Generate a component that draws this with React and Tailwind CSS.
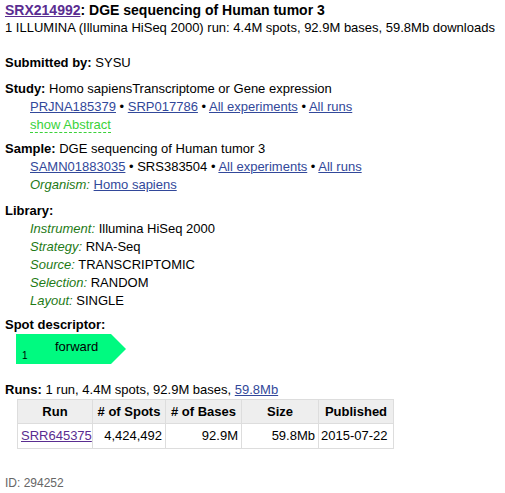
import React from 'react';

const A = ({ children, visited }) => (
  <a href="#" className={visited ? 'text-[#5a2d91] underline' : 'text-[#32489a] underline'}>
    {children}
  </a>
);

const Lbl = ({ children }) => <i className="text-[#1e7a16]">{children}:</i>;

const Dot = () => <span> • </span>;

export default function App() {
  return (
    <div className="font-['Liberation_Sans',Arial,sans-serif] text-[13px] leading-[18px] text-black px-[5px] pt-[1px] bg-white min-h-[493px]">
      <div className="text-[14px] font-bold leading-[18px]">
        <A visited>SRX214992</A>: DGE sequencing of Human tumor 3
      </div>
      <div>1 ILLUMINA (Illumina HiSeq 2000) run: 4.4M spots, 92.9M bases, 59.8Mb downloads</div>

      <div className="mt-[17px]">
        <b>Submitted by:</b> SYSU
      </div>

      <div className="mt-[8px]">
        <b>Study:</b> Homo sapiensTranscriptome or Gene expression
      </div>
      <div className="pl-[25px]">
        <A>PRJNA185379</A>
        <Dot />
        <A>SRP017786</A>
        <Dot />
        <A>All experiments</A>
        <Dot />
        <A>All runs</A>
      </div>
      <div className="pl-[25px]">
        <span className="text-[#3ad23a] border-b border-dashed border-[#3ad23a]">show Abstract</span>
      </div>

      <div className="mt-[6px]">
        <b>Sample:</b> DGE sequencing of Human tumor 3
      </div>
      <div className="pl-[25px]">
        <A>SAMN01883035</A>
        <Dot />
        SRS383504
        <Dot />
        <A>All experiments</A>
        <Dot />
        <A>All runs</A>
      </div>
      <div className="pl-[25px]">
        <Lbl>Organism</Lbl> <A>Homo sapiens</A>
      </div>

      <div className="mt-[8px] font-bold">Library:</div>
      <div className="pl-[25px]">
        <div><Lbl>Instrument</Lbl> Illumina HiSeq 2000</div>
        <div><Lbl>Strategy</Lbl> RNA-Seq</div>
        <div><Lbl>Source</Lbl> TRANSCRIPTOMIC</div>
        <div><Lbl>Selection</Lbl> RANDOM</div>
        <div><Lbl>Layout</Lbl> SINGLE</div>
      </div>

      <div className="mt-[6px] font-bold">Spot descriptor:</div>
      <div className="pl-[11px]">
        <div className="relative w-[110px] h-[30px]">
          <svg width="110" height="30" className="absolute left-0 top-0">
            <polygon points="0,0 95,0 110,15 95,30 0,30" fill="#00fa80" />
          </svg>
          <span className="absolute left-[39px] top-[4px] text-[13px]">forward</span>
          <span className="absolute left-[6px] top-[13px] text-[10px]">1</span>
        </div>
      </div>

      <div className="mt-[17px]">
        <b>Runs:</b> 1 run, 4.4M spots, 92.9M bases, <A>59.8Mb</A>
      </div>
      <div className="pl-[12px]">
        <table className="border-collapse text-[13px] table-fixed w-[376px]">
          <thead>
            <tr className="bg-[#eeeeee]">
              <th className="border border-[#dddddd] px-[3px] h-[24px] w-[75px] text-center">Run</th>
              <th className="border border-[#dddddd] px-[3px] h-[24px] w-[73px] text-center">
                # of Spots
              </th>
              <th className="border border-[#dddddd] px-[3px] h-[24px] w-[76px] text-center">
                # of Bases
              </th>
              <th className="border border-[#dddddd] px-[3px] h-[24px] w-[77px] text-center">Size</th>
              <th className="border border-[#dddddd] px-[3px] h-[24px] w-[75px] text-center">Published</th>
            </tr>
          </thead>
          <tbody>
            <tr>
              <td className="border border-[#dddddd] px-[3px] h-[25px]">
                <A visited>SRR645375</A>
              </td>
              <td className="border border-[#dddddd] px-[3px] h-[25px] text-right">4,424,492</td>
              <td className="border border-[#dddddd] px-[3px] h-[25px] text-right">92.9M</td>
              <td className="border border-[#dddddd] px-[3px] h-[25px] text-right">59.8Mb</td>
              <td className="border border-[#dddddd] px-[2px] h-[25px] text-left">2015-07-22</td>
            </tr>
          </tbody>
        </table>
      </div>

      <div className="mt-[25px] text-[12px] text-[#666666]">ID: 294252</div>
    </div>
  );
}
